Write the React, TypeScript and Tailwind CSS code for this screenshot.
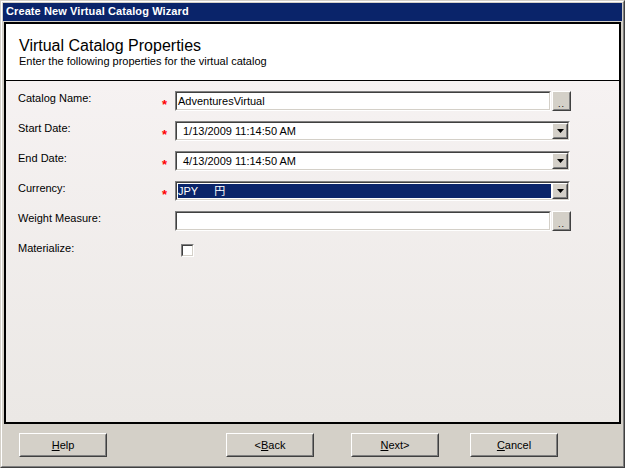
import React from "react";

const sans = "font-['Liberation_Sans',Arial,'Noto_Sans_CJK_JP',sans-serif]";

function Sunken({ className = "", children }: { className?: string; children?: React.ReactNode }) {
  return (
    <div className={`border border-t-[#808080] border-l-[#808080] border-b-white border-r-white ${className}`}>
      <div className="h-full border border-t-[#404040] border-l-[#404040] border-b-[#d4d0c8] border-r-[#d4d0c8] bg-white flex items-center">
        {children}
      </div>
    </div>
  );
}

function Raised({ className = "", children }: { className?: string; children?: React.ReactNode }) {
  return (
    <div className={`border border-t-white border-l-white border-b-[#404040] border-r-[#404040] bg-[#d4d0c8] ${className}`}>
      <div className="h-full border border-t-[#d4d0c8] border-l-[#d4d0c8] border-b-[#808080] border-r-[#808080] flex items-center justify-center">
        {children}
      </div>
    </div>
  );
}

function Arrow() {
  return (
    <svg width="7" height="4" viewBox="0 0 7 4">
      <path d="M0 0h7L3.5 4z" fill="#000" />
    </svg>
  );
}

function Star() {
  return <span className="w-[14px] text-[#ff0000] text-[13px] font-bold leading-none pt-[7px] pl-[1px]">*</span>;
}

function Row({ label, required, children }: { label: string; required?: boolean; children: React.ReactNode }) {
  return (
    <div className="flex h-[30px]">
      <div className="w-[143px] text-[11px] leading-[13px] pt-[1px] text-black">{label}</div>
      {required ? <Star /> : <span className="w-[14px]" />}
      {children}
    </div>
  );
}

function TextBox({ value }: { value: string }) {
  return (
    <div className="flex">
      <Sunken className="w-[376px] h-[20px]">
        <span className="pl-[1px] text-[11px] leading-[13px]">{value}</span>
      </Sunken>
      <Raised className="ml-[1px] w-[19px] h-[20px]">
        <span className="text-[9px] leading-none pt-[6px] tracking-[1px]">..</span>
      </Raised>
    </div>
  );
}

function Combo({ value, selected }: { value: React.ReactNode; selected?: boolean }) {
  return (
    <Sunken className="w-[395px] h-[20px]">
      <div className="flex-1 h-full p-[1px]">
        <div
          className={`h-full flex items-center text-[11px] leading-[13px] ${
            selected ? "bg-[#0a246a] text-white pl-[0px]" : "text-black pl-[5px]"
          }`}
        >
          {value}
        </div>
      </div>
      <Raised className="w-[16px] h-[16px]">
        <Arrow />
      </Raised>
    </Sunken>
  );
}

function Btn({ children, className = "" }: { children: React.ReactNode; className?: string }) {
  return (
    <Raised className={`w-[88px] h-[24px] ${className}`}>
      <span className="text-[11px] leading-[13px] text-black">{children}</span>
    </Raised>
  );
}

export default function App() {
  return (
    <div className={`${sans} w-[625px] h-[468px] bg-[#d4d0c8]`}>
      <div className="h-full border border-t-[#d4d0c8] border-l-[#d4d0c8] border-b-[#404040] border-r-[#404040]">
        <div className="h-full border border-t-white border-l-white border-b-[#808080] border-r-[#808080] p-[1px] flex flex-col">
          <div className="h-[18px] bg-[#0a246a] text-white text-[11px] font-bold leading-[13px] pl-[3px] pt-[2px] tracking-[0.1px]">
            Create New Virtual Catalog Wizard
          </div>
          <div className="mt-[1px] ml-[1px] mr-[1px] h-[402px] border-2 border-[#000] flex flex-col">
            <div className="h-[57px] shrink-0 bg-white border-b border-[#000] pl-[13px] pt-[13px]">
              <div className="text-[16px] leading-[18px] text-black">Virtual Catalog Properties</div>
              <div className="text-[11px] leading-[13px] text-black">
                Enter the following properties for the virtual catalog
              </div>
            </div>
            <div className="flex-1 bg-gradient-to-b from-[#f6f2f2] to-[#ebe8e5] pl-[12px] pt-[10px]">
              <Row label="Catalog Name:" required>
                <TextBox value="AdventuresVirtual" />
              </Row>
              <Row label="Start Date:" required>
                <Combo value="1/13/2009 11:14:50 AM" />
              </Row>
              <Row label="End Date:" required>
                <Combo value="4/13/2009 11:14:50 AM" />
              </Row>
              <Row label="Currency:" required>
                <Combo
                  selected
                  value={
                    <>
                      <span>JPY</span>
                      <span className="ml-[16px]">円</span>
                    </>
                  }
                />
              </Row>
              <Row label="Weight Measure:">
                <TextBox value="" />
              </Row>
              <Row label="Materialize:">
                <div className="pl-[6px] pt-[3px]">
                  <Sunken className="w-[13px] h-[13px]" />
                </div>
              </Row>
            </div>
          </div>
          <div className="flex-1 flex items-start pt-[9px] pl-[16px]">
            <Btn>
              <span className="underline">H</span>elp
            </Btn>
            <Btn className="ml-[119px]">
              &lt;<span className="underline">B</span>ack
            </Btn>
            <Btn className="ml-[37px]">
              <span className="underline">N</span>ext&gt;
            </Btn>
            <Btn className="ml-[31px]">
              <span className="underline">C</span>ancel
            </Btn>
          </div>
        </div>
      </div>
    </div>
  );
}
